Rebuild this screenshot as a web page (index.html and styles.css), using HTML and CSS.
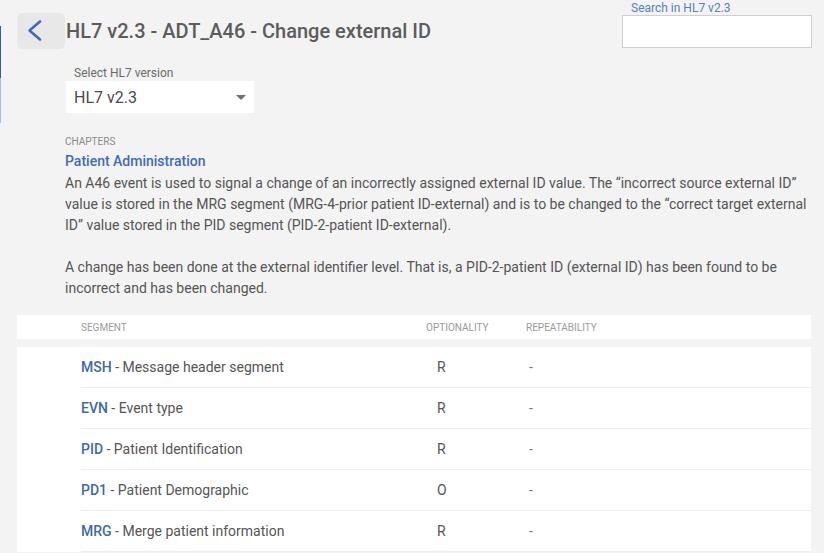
FILE: index.html
```html
<!DOCTYPE html>
<html lang="en">
<head>
<meta charset="utf-8">
<title>HL7 v2.3 - ADT_A46 - Change external ID</title>
<link rel="stylesheet" href="styles.css">
</head>
<body>
<div class="page">
  <div class="rail">
    <span class="rail-gap"></span>
    <span class="rail-active"></span>
    <span class="rail-hover"></span>
  </div>
  <main class="main">
    <header class="topbar">
      <div class="title-group">
        <button class="back" type="button" aria-label="Back">
          <svg width="48" height="36" viewBox="0 0 48 36" aria-hidden="true">
            <polyline points="23,8.5 12.5,17.5 23,26.5" fill="none" stroke="#3b6fb4" stroke-width="2.6" stroke-linecap="round" stroke-linejoin="round"/>
          </svg>
        </button>
        <h1 class="title">HL7 v2.3 - ADT_A46 - Change external ID</h1>
      </div>
      <div class="search">
        <label class="search-label" for="q">Search in HL7 v2.3</label>
        <input class="search-input" id="q" type="text">
      </div>
    </header>

    <section class="version">
      <div class="version-label">Select HL7 version</div>
      <div class="select">
        <span class="select-value">HL7 v2.3</span>
        <span class="select-arrow"></span>
      </div>
    </section>

    <section class="intro">
      <div class="chapters">CHAPTERS</div>
      <div class="chapter">Patient Administration</div>
      <p class="desc">An A46 event is used to signal a change of an incorrectly assigned external ID value. The “incorrect source external ID” value is stored in the MRG segment (MRG-4-prior patient ID-external) and is to be changed to the “correct target external ID” value stored in the PID segment (PID-2-patient ID-external).<br><br>A change has been done at the external identifier level. That is, a PID-2-patient ID (external ID) has been found to be incorrect and has been changed.</p>
    </section>

    <div class="thead">
      <div class="row-grid">
        <span>Segment</span>
        <span>Optionality</span>
        <span>Repeatability</span>
      </div>
    </div>

    <div class="tbody">
      <div class="row row-grid">
        <span class="seg"><b>MSH</b> - Message header segment</span>
        <span class="opt">R</span>
        <span class="rep">-</span>
      </div>
      <div class="row row-grid">
        <span class="seg"><b>EVN</b> - Event type</span>
        <span class="opt">R</span>
        <span class="rep">-</span>
      </div>
      <div class="row row-grid">
        <span class="seg"><b>PID</b> - Patient Identification</span>
        <span class="opt">R</span>
        <span class="rep">-</span>
      </div>
      <div class="row row-grid">
        <span class="seg"><b>PD1</b> - Patient Demographic</span>
        <span class="opt">O</span>
        <span class="rep">-</span>
      </div>
      <div class="row row-grid">
        <span class="seg"><b>MRG</b> - Merge patient information</span>
        <span class="opt">R</span>
        <span class="rep">-</span>
      </div>
    </div>
  </main>
</div>
</body>
</html>
```

FILE: styles.css
```css
* { box-sizing: border-box; }

html, body {
  margin: 0;
  padding: 0;
  background: #f3f3f3;
  font-family: Roboto, "Liberation Sans", Arial, sans-serif;
  color: #555;
}

.page {
  display: flex;
  min-height: 553px;
}

.rail {
  width: 1px;
  display: flex;
  flex-direction: column;
}
.rail-gap { height: 26px; }
.rail-active { height: 52px; background: #2f5ea6; }
.rail-hover { height: 45px; background: #a9c0e2; }

.main {
  flex: 1;
  padding: 0 13px 0 16px;
}

.topbar {
  display: flex;
  justify-content: space-between;
  align-items: flex-start;
}

.title-group {
  display: flex;
  align-items: center;
  margin-top: 13px;
}

.back {
  width: 48px;
  height: 36px;
  padding: 0;
  border: 0;
  border-radius: 5px;
  background: #e8e8e8;
  display: flex;
  align-items: center;
  justify-content: center;
}

.title {
  margin: 0 0 0 1px;
  font-size: 20px;
  font-weight: 500;
  color: #5c5c5c;
  line-height: 36px;
  letter-spacing: 0;
}

.search {
  width: 190px;
  margin-right: -1px;
  display: flex;
  flex-direction: column;
}
.search-label {
  font-size: 12px;
  line-height: 15px;
  color: #5582c0;
  padding-left: 9px;
  margin-top: 1px;
}
.search-input {
  height: 33px;
  margin: -1px 0 0 0;
  border: 1px solid #cfcfcf;
  background: #fff;
  font: inherit;
}

.version {
  margin: 16px 0 0 49px;
}
.version-label {
  font-size: 12px;
  line-height: 16px;
  color: #6a6a6a;
  padding-left: 8px;
}
.select {
  width: 188px;
  height: 32px;
  background: #fff;
  display: flex;
  align-items: center;
  justify-content: space-between;
  padding: 0 8px 0 8px;
}
.select-value {
  font-size: 16px;
  color: #4a4a4a;
}
.select-arrow {
  width: 0;
  height: 0;
  border-left: 5px solid transparent;
  border-right: 5px solid transparent;
  border-top: 5px solid #707070;
}

.intro {
  margin: 22px 0 0 48px;
}
.chapters {
  font-size: 10px;
  line-height: 14px;
  color: #8a8a8a;
}
.chapter {
  font-size: 14px;
  font-weight: 500;
  line-height: 20px;
  color: #3d6db3;
  margin-top: 2px;
}
.desc {
  margin: 2px 0 0 0;
  font-size: 14px;
  line-height: 21px;
  color: #555;
}

.row-grid {
  display: grid;
  grid-template-columns: 345px 100px 1fr;
  align-items: center;
}

.thead {
  margin-top: 16px;
  background: #fff;
  height: 24px;
  padding-left: 64px;
  display: flex;
  align-items: center;
}
.thead .row-grid {
  flex: 1;
  font-size: 10px;
  text-transform: uppercase;
  color: #9a9a9a;
}

.tbody {
  margin-top: 8px;
  background: #fff;
  padding-left: 64px;
}
.row {
  height: 41px;
  border-bottom: 1px solid #efefef;
  font-size: 14px;
  color: #555;
}
.seg b {
  font-weight: 500;
  color: #3d6aa8;
}
.opt {
  padding-left: 11px;
  color: #555;
}
.rep {
  padding-left: 3px;
  color: #777;
}
```
